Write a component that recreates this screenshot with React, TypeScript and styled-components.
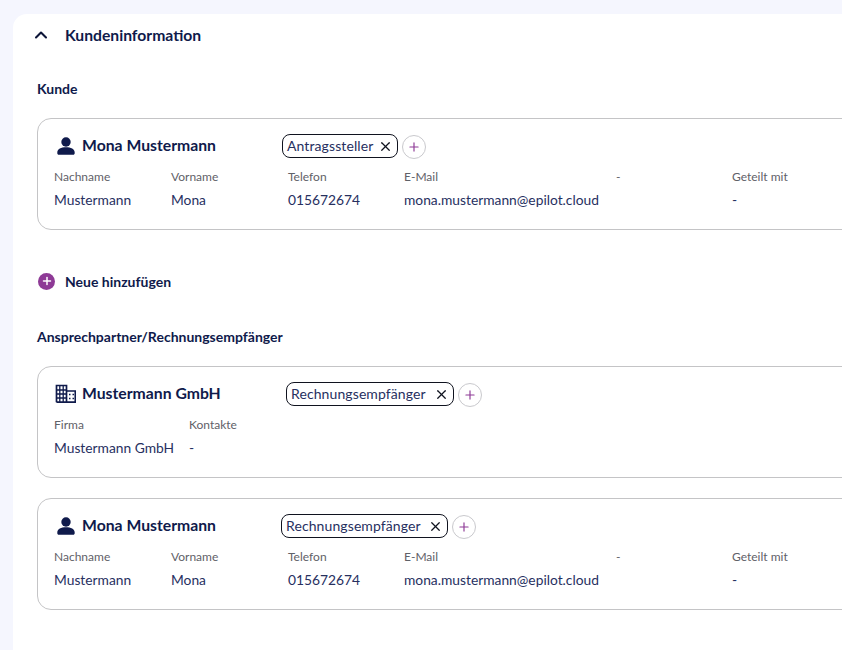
import styled, { createGlobalStyle } from 'styled-components';
import { ChevronUp, Plus, X } from 'lucide-react';

const GlobalStyle = createGlobalStyle`
  html, body {
    margin: 0;
    height: 100%;
    overflow: hidden;
    background: #f5f6fe;
  }
  body {
    font-family: "Lato", "Liberation Sans", sans-serif;
    color: #0f1a4b;
  }
`;

const Page = styled.div`
  width: 842px;
  height: 650px;
  padding: 14px 0 0 13px;
  box-sizing: border-box;
  overflow: hidden;
`;

const Panel = styled.section`
  width: 860px;
  height: 660px;
  background: #fff;
  border-radius: 14px 0 0 0;
  box-sizing: border-box;
`;

const PanelHeader = styled.header`
  height: 42px;
  display: flex;
  align-items: center;
  padding-left: 18px;
  gap: 14px;
  font-size: 15.7px;
  font-weight: 700;
  svg { color: #0c1438; }
`;

const PanelBody = styled.div`
  padding: 24px 0 0 24px;
  display: flex;
  flex-direction: column;
`;

const SectionTitle = styled.h3`
  margin: 0 0 21px;
  font-size: 14px;
  line-height: 17px;
  font-weight: 700;
`;

const Card = styled.article`
  width: 860px;
  height: 112px;
  box-sizing: border-box;
  border: 1px solid #c4c4c6;
  border-radius: 14px;
  padding: 0 0 0 16px;
  & + & { margin-top: 20px; }
`;

const CardHead = styled.div`
  height: 44px;
  padding-top: 5px;
  display: flex;
  align-items: center;
`;

const Name = styled.div<{ $width: number }>`
  width: ${(p) => p.$width}px;
  display: flex;
  align-items: center;
  gap: 6px;
  font-size: 15.75px;
  font-weight: 700;
  margin-top: -4px;
  svg { flex: none; }
`;

const Chip = styled.span<{ $gap: number }>`
  height: 22px;
  display: inline-flex;
  align-items: center;
  gap: ${(p) => p.$gap}px;
  padding: 0 4px;
  border: 1px solid #10131f;
  border-radius: 8px;
  font-size: 14px;
  line-height: 18px;
  color: #27305f;
  letter-spacing: 0.1px;
  svg { color: #10131f; }
`;

const AddTag = styled.span`
  width: 24px;
  height: 24px;
  margin-left: 4px;
  margin-top: 1px;
  display: inline-flex;
  align-items: center;
  justify-content: center;
  border: 1px solid #c9c9cd;
  border-radius: 50%;
  box-sizing: border-box;
  color: #8e3a96;
`;

const Fields = styled.div<{ $columns: string }>`
  display: grid;
  grid-template-columns: ${(p) => p.$columns};
  grid-template-rows: 16px 24px;
  row-gap: 3px;
  align-items: center;
`;

const Label = styled.div`
  font-size: 12px;
  color: #5f6168;
`;

const Value = styled.div`
  font-size: 13.8px;
  color: #27305f;
  white-space: nowrap;
`;

const AddRow = styled.div`
  display: flex;
  align-items: center;
  gap: 10px;
  margin: 41px 0 37px 1px;
  height: 20px;
  font-size: 14px;
  font-weight: 700;
`;

const AddDot = styled.span`
  width: 17px;
  height: 17px;
  border-radius: 50%;
  background: #8e3a96;
  color: #fff;
  display: inline-flex;
  align-items: center;
  justify-content: center;
`;

const PersonIcon = () => (
  <svg width="22" height="22" viewBox="0 0 22 22" fill="#0f1a4b">
    <circle cx="12" cy="9" r="4.700" />
    <path d="M3.300 19.500c0-3.400 3.800-5.200 8.700-5.200s8.700 1.800 8.700 5.200v.7c0 .9-.6 1.500-1.500 1.500H4.800c-.9 0-1.500-.6-1.500-1.500z" />
  </svg>
);

const BuildingIcon = () => (
  <svg width="22" height="22" viewBox="0 0 22 22" fill="none" stroke="#0f1a4b" strokeWidth="1.7">
    <path d="M2.500 21.200V4.500h10V21.200M12.500 10h8.800v11.200H2.500" />
    <path d="M2.500 9h10M2.500 13h10M2.500 17h10M5.800 4.500V21.200M9.200 4.500V21.200" strokeWidth="1.300" />
    <path d="M15 13.500h1.500M18.500 13.500H20M15 17.500h1.500M18.500 17.500H20" />
  </svg>
);

const PERSON_COLUMNS = '117px 117px 116px 212px 116px 116px';
const COMPANY_COLUMNS = '135px 100px';

interface IField {
  label: string;
  value: string;
}

const personFields: IField[] = [
  { label: 'Nachname', value: 'Mustermann' },
  { label: 'Vorname', value: 'Mona' },
  { label: 'Telefon', value: '015672674' },
  { label: 'E-Mail', value: 'mona.mustermann@epilot.cloud' },
  { label: '-', value: '' },
  { label: 'Geteilt mit', value: '-' },
];

const companyFields: IField[] = [
  { label: 'Firma', value: 'Mustermann GmbH' },
  { label: 'Kontakte', value: '-' },
];

interface IContactCard {
  icon: React.ReactNode;
  name: string;
  nameWidth: number;
  tag: string;
  tagGap: number;
  fields: IField[];
  columns: string;
}

function ContactCard({ icon, name, nameWidth, tag, tagGap, fields, columns }: IContactCard) {
  return (
    <Card>
      <CardHead>
        <Name $width={nameWidth}>
          {icon}
          {name}
        </Name>
        <Chip $gap={tagGap}>
          {tag}
          <X size={15} strokeWidth={2} />
        </Chip>
        <AddTag>
          <Plus size={14} strokeWidth={2} />
        </AddTag>
      </CardHead>
      <Fields $columns={columns}>
        {fields.map((f) => (
          <Label key={f.label}>{f.label}</Label>
        ))}
        {fields.map((f) => (
          <Value key={f.label}>{f.value}</Value>
        ))}
      </Fields>
    </Card>
  );
}

export default function App() {
  return (
    <Page>
      <GlobalStyle />
      <Panel>
        <PanelHeader>
          <ChevronUp size={20} strokeWidth={2.5} />
          Kundeninformation
        </PanelHeader>
        <PanelBody>
          <SectionTitle>Kunde</SectionTitle>
          <ContactCard
            icon={<PersonIcon />}
            name="Mona Mustermann"
            nameWidth={228}
            tag="Antragssteller"
            tagGap={5}
            fields={personFields}
            columns={PERSON_COLUMNS}
          />
          <AddRow>
            <AddDot>
              <Plus size={12} strokeWidth={3} />
            </AddDot>
            Neue hinzufügen
          </AddRow>
          <SectionTitle>Ansprechpartner/Rechnungsempfänger</SectionTitle>
          <ContactCard
            icon={<BuildingIcon />}
            name="Mustermann GmbH"
            nameWidth={232}
            tag="Rechnungsempfänger"
            tagGap={8}
            fields={companyFields}
            columns={COMPANY_COLUMNS}
          />
          <ContactCard
            icon={<PersonIcon />}
            name="Mona Mustermann"
            nameWidth={227}
            tag="Rechnungsempfänger"
            tagGap={7}
            fields={personFields}
            columns={PERSON_COLUMNS}
          />
        </PanelBody>
      </Panel>
    </Page>
  );
}
